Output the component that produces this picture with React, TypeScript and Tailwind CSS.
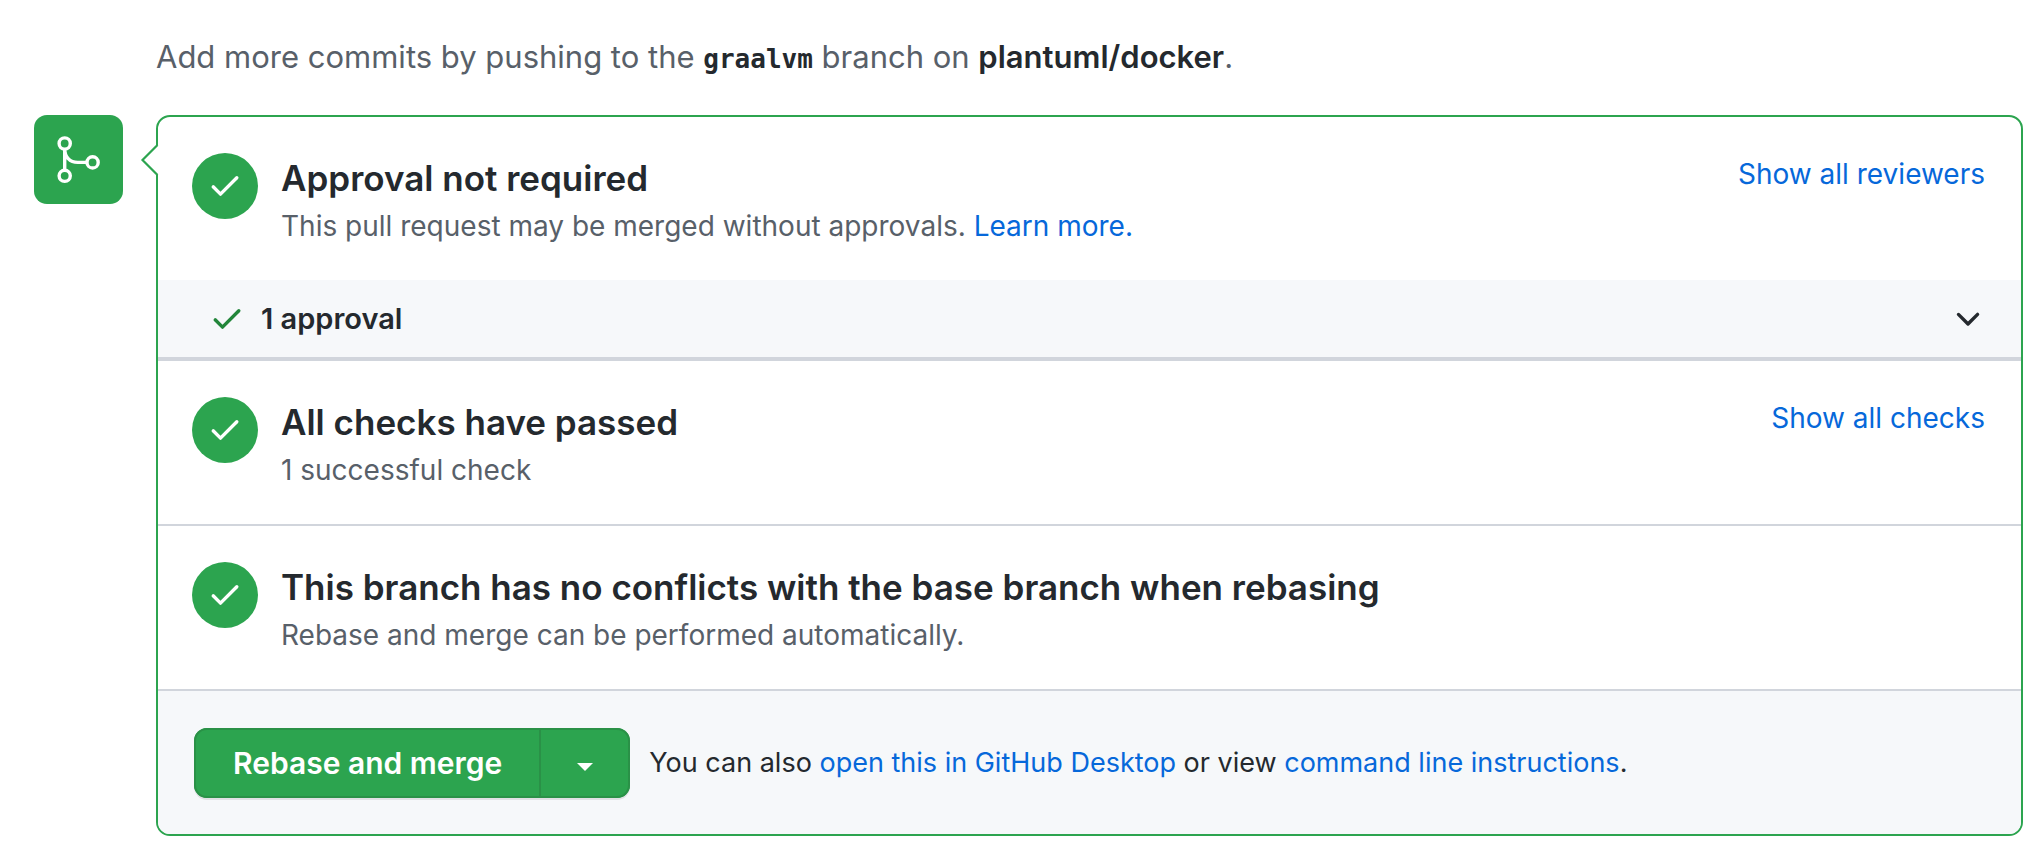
import type { ReactNode } from "react";

function CheckIcon({ className }: { className: string }) {
  return (
    <svg viewBox="0 0.4 16 16" fill="currentColor" aria-hidden="true" className={className}>
      <path d="M13.78 4.22a.75.75 0 0 1 0 1.06l-7.25 7.25a.75.75 0 0 1-1.06 0L2.22 9.28a.75.75 0 0 1 1.06-1.06L6 10.94l6.72-6.72a.75.75 0 0 1 1.06 0Z" />
    </svg>
  );
}

function MergeIcon() {
  return (
    <svg viewBox="0 0 89 89" fill="none" stroke="white" strokeWidth="3.4" aria-hidden="true" className="size-full">
      <circle cx="30.7" cy="28.5" r="5.6" />
      <circle cx="30.7" cy="60.8" r="5.6" />
      <circle cx="58.6" cy="47.4" r="5.6" />
      <path d="M30.7 34v21.4M30.7 34c0 7.8 5 13.4 13 13.4h9.5" />
    </svg>
  );
}

function TextLink({ children }: { children: ReactNode }) {
  return (
    <a href="#" className="text-[#0668da] hover:underline">
      {children}
    </a>
  );
}

type StatusProps = { title: string; children: ReactNode; action?: string };

function StatusRow({ title, children, action }: StatusProps) {
  return (
    <div className="flex items-start pt-9 pr-9 pb-[31px] pl-[34px]">
      <span className="flex size-[66px] shrink-0 items-center justify-center rounded-full bg-[#2ca44f] text-white">
        <CheckIcon className="size-9" />
      </span>
      <div className="ml-[23px] grow">
        <h3 className="text-[35px] leading-[50px] font-semibold">{title}</h3>
        <p className="text-[28px] leading-[46px] text-[#586069]">{children}</p>
      </div>
      {action && (
        <p className="shrink-0 text-[28px] leading-[42px]">
          <TextLink>{action}</TextLink>
        </p>
      )}
    </div>
  );
}

export default function App() {
  return (
    <main className="bg-white pt-9 pr-[15px] pb-5 pl-[34px] font-['Inter','Liberation_Sans',sans-serif] text-[#24292e]">
      <p className="mb-[37px] ml-[122px] text-[31px] leading-[42px] text-[#586069]">
        Add more commits by pushing to the{" "}
        <strong className="font-['DejaVu_Sans_Mono',monospace] text-[26px] leading-none font-bold text-[#24292e]">graalvm</strong>{" "}
        branch on <strong className="font-semibold text-[#24292e]">plantuml/docker</strong>.
      </p>
      <div className="flex items-start">
        <div className="size-[89px] shrink-0 rounded-[13px] bg-[#2ca44f]">
          <MergeIcon />
        </div>
        <section className="relative ml-[33px] grow rounded-[14px] border-2 border-[#2ca44f] bg-white">
          <svg viewBox="0 0 20 36" aria-hidden="true" className="absolute top-[25px] -left-[18px] h-9 w-5">
            <path d="M18 3 3 18l15 15h2V3Z" fill="white" />
            <path d="M17.5 3 2.5 18l15 15" fill="none" stroke="#2ca44f" strokeWidth="2.2" />
          </svg>
          <StatusRow title="Approval not required" action="Show all reviewers">
            This pull request may be merged without approvals. <TextLink>Learn more.</TextLink>
          </StatusRow>
          <button type="button" className="flex h-[81px] w-full items-center border-b-4 border-[#d1d5dc] bg-[#f6f8fa] pr-[35px] pl-[51px] text-left text-[29px] leading-[42px] font-semibold">
            <CheckIcon className="size-9 text-[#22863a]" />
            <span className="ml-4 grow">1 approval</span>
            <svg viewBox="0 0.8 16 16" fill="currentColor" aria-hidden="true" className="size-9">
              <path d="M12.78 6.22a.75.75 0 0 1 0 1.06l-4.25 4.25a.75.75 0 0 1-1.06 0L3.22 7.28a.75.75 0 0 1 1.06-1.06L8 9.94l3.72-3.72a.75.75 0 0 1 1.06 0Z" />
            </svg>
          </button>
          <StatusRow title="All checks have passed" action="Show all checks">
            1 successful check
          </StatusRow>
          <div className="border-y-2 border-[#d1d5dc]">
            <StatusRow title="This branch has no conflicts with the base branch when rebasing">
              Rebase and merge can be performed automatically.
            </StatusRow>
          </div>
          <div className="flex items-center gap-[19px] rounded-b-xl bg-[#f6f8fa] px-9 pt-[37px] pb-9">
            <div className="flex h-[70px] shrink-0 rounded-[13px] bg-[#2ca44f] text-white shadow-[0_2px_0_rgba(27,31,35,0.1)]">
              <button type="button" className="rounded-l-[13px] border-2 border-[#2a9147] px-[37px] text-[30px] leading-[42px] font-semibold">
                Rebase and merge
              </button>
              <button type="button" aria-label="Select merge method" className="flex w-[89px] items-center justify-center rounded-r-[13px] border-y-2 border-r-2 border-[#2a9147]">
                <svg viewBox="0 0 16 8" fill="currentColor" aria-hidden="true" className="mt-2 h-2 w-4">
                  <path d="M0 0h16L8 8Z" />
                </svg>
              </button>
            </div>
            <p className="text-[27px] leading-10">
              You can also <TextLink>open this in GitHub Desktop</TextLink> or view{" "}
              <TextLink>command line instructions</TextLink>.
            </p>
          </div>
        </section>
      </div>
    </main>
  );
}
